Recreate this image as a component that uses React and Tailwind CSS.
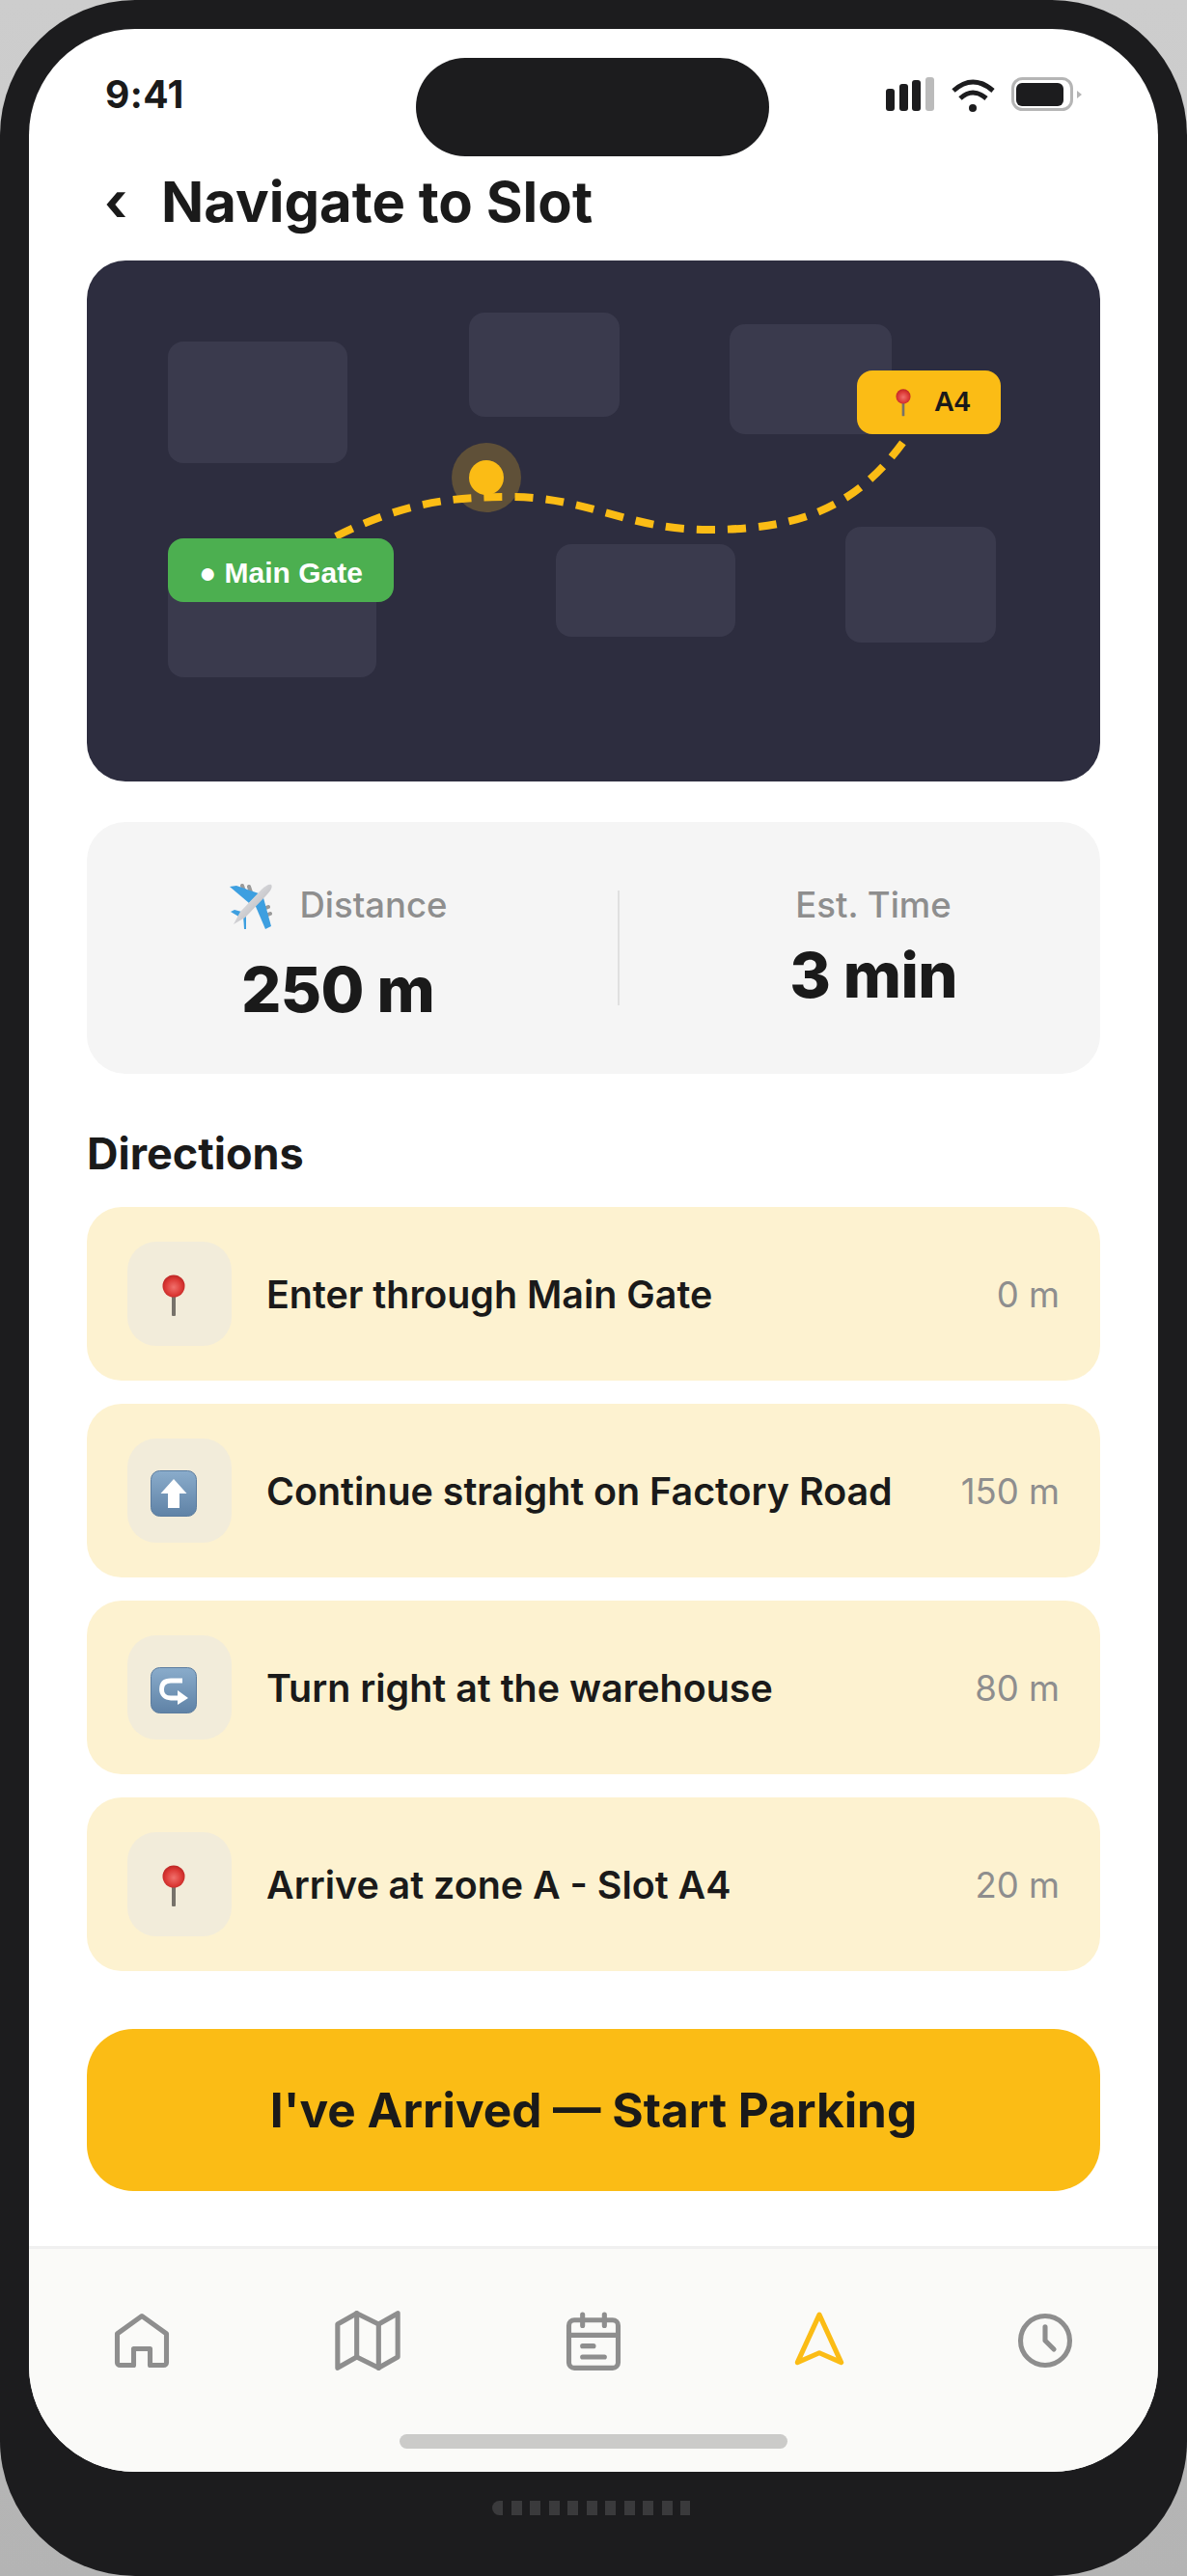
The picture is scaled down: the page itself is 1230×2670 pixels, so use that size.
import React from 'react';

const font = { fontFamily: 'Inter, "Liberation Sans", sans-serif' };

const Pin = ({ className }) => (
    <svg className={className} viewBox="0 0 24 44">
        <defs>
            <radialGradient id="pinHead" cx="0.5" cy="0.55" r="0.6">
                <stop offset="0" stopColor="#f0706c" />
                <stop offset="0.6" stopColor="#dc3a36" />
                <stop offset="1" stopColor="#b5201f" />
            </radialGradient>
        </defs>
        <rect x="10" y="22" width="4" height="21" rx="1" fill="#77726a" />
        <circle cx="12" cy="12" r="11.5" fill="url(#pinHead)" />
    </svg>
);

const ArrowTile = ({ children }) => (
    <svg className="w-[48px] h-[48px] ml-[-12px] mt-[6px]" viewBox="0 0 48 48">
        <defs>
            <linearGradient id="tileBlue" x1="0" y1="0" x2="0" y2="1">
                <stop offset="0" stopColor="#8aaccb" />
                <stop offset="1" stopColor="#5f82a6" />
            </linearGradient>
        </defs>
        <rect x="0.5" y="0.5" width="47" height="47" rx="9" fill="url(#tileBlue)" stroke="#5b7c9f" />
        {children}
    </svg>
);

const UpArrow = () => (
    <ArrowTile>
        <path d="M24 9 L37.5 24 H30 V39 H18 V24 H10.5 Z" fill="#fff" />
    </ArrowTile>
);

const TurnArrow = () => (
    <ArrowTile>
        <path d="M33 14 H21 C14 14 11.5 18 11.5 23 C11.5 28 15 32 21 32 H30" fill="none" stroke="#fff" strokeWidth="4.8" />
        <path d="M28 24 L39 32 L28 39 Z" fill="#fff" />
    </ArrowTile>
);

const Plane = () => (
    <svg className="w-[70px] h-[70px] shrink-0" viewBox="0 0 70 70">
        <defs>
            <linearGradient id="planeBody" x1="0" y1="0" x2="1" y2="1">
                <stop offset="0" stopColor="#f4f4f6" />
                <stop offset="1" stopColor="#a9a9ae" />
            </linearGradient>
        </defs>
        <path d="M26 15 L28 21 M33 16 L35 22 M53 37 L48 39 M55 44 L50 46" stroke="#9a9a9a" strokeWidth="4" strokeLinecap="round" />
        <path d="M13 16 L20 15 L43 23 L33 33 Z" fill="#3d9fe0" />
        <path d="M38 32 L47 24 L56 57 L50 60 Z" fill="#3d9fe0" />
        <path d="M14 42 L18 40 L29 43 L24 48 Z" fill="#3d9fe0" />
        <path d="M27 45 L30 42 L30 60 L28 60 Z" fill="#3d9fe0" />
        <path d="M17 55 L24 42 L46 19 C50 15 54 13 56 14 C58 16 55 21 51 25 L29 48 Z" fill="url(#planeBody)" />
    </svg>
);

const steps = [
    { icon: 'pin', text: 'Enter through Main Gate', dist: '0 m' },
    { icon: 'up', text: 'Continue straight on Factory Road', dist: '150 m' },
    { icon: 'turn', text: 'Turn right at the warehouse', dist: '80 m' },
    { icon: 'pin', text: 'Arrive at zone A - Slot A4', dist: '20 m' },
];

const StepIcon = ({ icon }) => {
    if (icon === 'up') return <UpArrow />;
    if (icon === 'turn') return <TurnArrow />;
    return <Pin className="w-[24px] h-[44px] ml-[-12px] mt-[3px]" />;
};

const buildings = [
    'left-[84px] top-[84px] w-[186px] h-[126px]',
    'left-[396px] top-[54px] w-[156px] h-[108px]',
    'left-[666px] top-[66px] w-[168px] h-[114px]',
    'left-[84px] top-[330px] w-[216px] h-[102px]',
    'left-[486px] top-[294px] w-[186px] h-[96px]',
    'left-[786px] top-[276px] w-[156px] h-[120px]',
];

const MapCard = () => (
    <div className="relative h-[540px] rounded-[40px] bg-[#2d2d3f] overflow-hidden">
        {buildings.map(b => (
            <div key={b} className={`absolute rounded-[16px] bg-[#3a3a4d] ${b}`} />
        ))}
        <div className="absolute left-[378px] top-[189px] w-[72px] h-[72px] rounded-full bg-[#5f5038] flex items-center justify-center">
            <div className="w-[36px] h-[36px] rounded-full bg-[#fbbc15]" />
        </div>
        <svg className="absolute inset-0 w-full h-full" viewBox="0 0 1050 540" fill="none">
            <path d="M258 286 C330 250 380 245 438 245 C520 245 560 279 644 279 C740 279 800 255 851 181" stroke="#fbbc15" strokeWidth="8" strokeDasharray="19 13" />
        </svg>
        <div className="absolute left-[84px] top-[288px] w-[234px] h-[66px] pt-[5px] rounded-[16px] bg-[#4caf50] flex items-center justify-center text-white font-bold text-[30px]" style={{ fontFamily: '"Liberation Sans", sans-serif' }}>
            ● Main Gate
        </div>
        <div className="absolute left-[798px] top-[114px] w-[149px] h-[66px] rounded-[16px] bg-[#fbbc15] flex items-center text-[#1a1a1a] font-bold text-[29px]" style={{ fontFamily: '"Liberation Sans", sans-serif' }}>
            <Pin className="w-[16px] h-[29px] ml-[40px] mr-[24px]" />
            A4
        </div>
    </div>
);

const NavIcon = ({ children, active }) => (
    <div className="flex justify-center">
        <svg className={`w-[68px] h-[68px] ${active ? 'text-[#fbbc15]' : 'text-[#8e8e8e]'}`} viewBox="0 0 24 24" fill="none" stroke="currentColor" strokeWidth="1.8" strokeLinecap="round" strokeLinejoin="round">
            {children}
        </svg>
    </div>
);

const App = () => {
    return (
        <div className="w-[1230px] h-[2670px] bg-gradient-to-b from-[#cdcdcd] to-[#b4b4b4]" style={font}>
            <div className="w-full h-full rounded-[140px] bg-[#1c1c1e] pt-[30px] px-[30px] flex flex-col">
                <div className="relative h-[2532px] rounded-[110px] bg-white overflow-hidden flex flex-col">
                    <div className="absolute left-[401px] top-[30px] w-[366px] h-[102px] rounded-[51px] bg-[#1c1c1e]" />

                    <div className="h-[134px] shrink-0 flex items-center justify-between pl-[79px] pr-[78px] pt-[2px]">
                        <span className="text-[39px] font-bold text-[#1a1a1a] tracking-[0.01em]">9:41</span>
                        <svg className="w-[204px] h-[36px]" viewBox="918 78 204 36">
                            <rect x="918" y="90" width="9" height="23" rx="3" fill="#1c1c1e" />
                            <rect x="932" y="85" width="9" height="28" rx="3" fill="#1c1c1e" />
                            <rect x="945" y="81" width="9" height="32" rx="3" fill="#1c1c1e" />
                            <rect x="959" y="78" width="9" height="35" rx="3" fill="#bbbbbb" />
                            <path d="M988 92 Q1008 74 1029 92" fill="none" stroke="#1c1c1e" strokeWidth="5" />
                            <path d="M995 100 Q1008 88 1022 100" fill="none" stroke="#1c1c1e" strokeWidth="5" />
                            <circle cx="1008" cy="110" r="4" fill="#1c1c1e" />
                            <rect x="1049.5" y="79.5" width="61" height="32" rx="10" fill="none" stroke="#b5b5b5" strokeWidth="3" />
                            <rect x="1053" y="84" width="49" height="24" rx="6" fill="#1c1c1e" />
                            <path d="M1116 92 L1121 96 L1116 100 Z" fill="#b5b5b5" />
                        </svg>
                    </div>

                    <div className="h-[90px] shrink-0 flex items-center pl-[78px]">
                        <span className="w-[59px] text-[56px] font-bold text-[#1a1a1a] leading-none">‹</span>
                        <h1 className="text-[58px] font-bold text-[#1a1a1a]">Navigate to Slot</h1>
                    </div>

                    <div className="mt-[16px] px-[60px]">
                        <MapCard />

                        <div className="mt-[42px] h-[261px] rounded-[40px] bg-[#f5f5f5] flex">
                            <div className="w-[520px] mr-[30px] pt-[64px] flex flex-col items-center">
                                <div className="h-[44px] flex items-center gap-[28px]">
                                    <span className="w-[46px] h-[46px] flex items-center justify-center"><Plane /></span>
                                    <span className="text-[36.5px] font-medium text-[#8e8e8e]">Distance</span>
                                </div>
                                <div className="mt-[31px] text-[65px] leading-[70px] font-extrabold tracking-[-0.01em] text-[#1a1a1a]">250 m</div>
                            </div>
                            <div className="w-[2px] h-[119px] self-center bg-[#e0e0e0]" />
                            <div className="flex-1 pl-[28px] pt-[64px] flex flex-col items-center">
                                <div className="h-[44px] flex items-center text-[36.5px] font-medium text-[#8e8e8e]">Est. Time</div>
                                <div className="mt-[16px] text-[65px] leading-[70px] font-extrabold tracking-[-0.01em] text-[#1a1a1a]">3 min</div>
                            </div>
                        </div>

                        <h2 className="mt-[50px] mb-[22px] h-[66px] flex items-center text-[45px] font-bold text-[#1a1a1a]">Directions</h2>

                        <div className="flex flex-col gap-[24px]">
                            {steps.map(step => (
                                <div key={step.text} className="h-[180px] rounded-[36px] bg-[#fdf2d0] flex items-center pl-[42px] pr-[42px]">
                                    <div className="w-[108px] h-[108px] shrink-0 rounded-[30px] bg-[#f2ecda] flex items-center justify-center">
                                        <StepIcon icon={step.icon} />
                                    </div>
                                    <span className="ml-[36px] pt-[4px] flex-1 text-[39.4px] font-semibold text-[#1a1a1a]">{step.text}</span>
                                    <span className="pt-[2px] text-[36.5px] text-[#8e8e8e]">{step.dist}</span>
                                </div>
                            ))}
                        </div>

                        <div className="mt-[60px] h-[168px] rounded-[48px] bg-[#fbbc15] flex items-center justify-center text-[49.5px] font-bold text-[#1a1a1a]">
                            I've Arrived — Start Parking
                        </div>
                    </div>

                    <div className="mt-auto h-[234px] shrink-0 bg-[#fafaf8] border-t-[3px] border-[#f0f0f0] pt-[61px] flex flex-col">
                        <div className="grid grid-cols-5">
                            <NavIcon>
                                <path d="M3 9.5 L12 3 L21 9.5 V20 a1 1 0 0 1-1 1 H15 V15 H9 V21 H4 a1 1 0 0 1-1-1 Z" />
                            </NavIcon>
                            <NavIcon>
                                <path d="M1 6 V22 L8 18 L16 22 L23 18 V2 L16 6 L8 2 Z" />
                                <path d="M8 2 V18 M16 6 V22" />
                            </NavIcon>
                            <NavIcon>
                                <rect x="3" y="4.5" width="18" height="17.5" rx="2" />
                                <path d="M8 2.5 V6.5 M16 2.5 V6.5 M3 10 H21 M8 14 H12 M8 18 H16" />
                            </NavIcon>
                            <NavIcon active>
                                <path d="M12 2.5 L20 20 L12 16.5 L4 20 Z" />
                            </NavIcon>
                            <NavIcon>
                                <circle cx="12" cy="12" r="9" />
                                <path d="M12 7 V12 L15.2 15.2" />
                            </NavIcon>
                        </div>
                        <div className="mt-[63px] mx-auto w-[402px] h-[15px] rounded-full bg-[#cbcbc9]" />
                    </div>
                </div>

                <div className="mt-[30px] ml-[480px] w-[205px] h-[15px] rounded-l-full overflow-hidden flex gap-[8.5px]">
                    {Array.from({ length: 11 }).map((_, i) => (
                        <div key={i} className="w-[11px] h-full shrink-0 bg-[#3a3a3c]" />
                    ))}
                </div>
            </div>
        </div>
    );
};

export default App;
